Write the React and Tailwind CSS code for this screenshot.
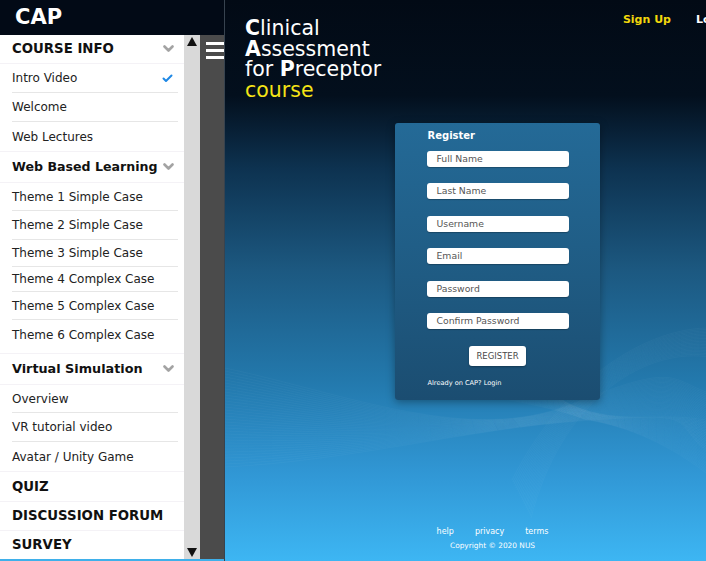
import React from "react";

const Chevron = () => (
  <svg width="11" height="8" viewBox="0 0 11 8" className="shrink-0">
    <polyline points="1.5,1.5 5.5,5.5 9.5,1.5" fill="none" stroke="#a3a3a3" strokeWidth="2.6" strokeLinecap="round" strokeLinejoin="round" />
  </svg>
);

const Check = () => (
  <svg width="11" height="9" viewBox="0 0 11 9" className="shrink-0">
    <polyline points="1.5,4.5 4,7 9.5,1.5" fill="none" stroke="#1e88e5" strokeWidth="2" strokeLinecap="round" strokeLinejoin="round" />
  </svg>
);

const Header = ({ label, h, chevron = true, size = "text-[13.3px]" }) => (
  <div className="bg-white flex items-center justify-between pl-[12px] pr-[10px] mb-px" style={{ height: h }}>
    <span className={`font-bold ${size} text-[#111] whitespace-nowrap`}>{label}</span>
    {chevron && <Chevron />}
  </div>
);

const Item = ({ label, h, last, check }) => (
  <div className="mx-[12px] mr-[6px] flex items-center justify-between" style={{ height: h, borderBottom: last ? "none" : "1px solid #e6e6e6" }}>
    <span className="text-[12px] text-[#222] whitespace-nowrap">{label}</span>
    {check && <span className="mr-[5px]"><Check /></span>}
  </div>
);

const Group = ({ items, pb = 0 }) => (
  <div className="bg-white mb-px" style={{ paddingBottom: pb }}>
    {items.map((it, i) => (
      <Item key={it[0]} label={it[0]} h={it[1]} check={it[2]} last={i === items.length - 1} />
    ))}
  </div>
);

const Field = ({ label, mt }) => (
  <div
    className="w-[142px] h-[16px] bg-white rounded-[3px] flex items-center pl-[10px] text-[9.3px] text-[#555] shadow-[0_1px_1px_rgba(0,0,0,0.25)]"
    style={{ marginTop: mt }}
  >
    {label}
  </div>
);

function Waves() {
  const a = Array.from({ length: 34 }, (_, i) => i);
  return (
    <svg className="absolute inset-0 pointer-events-none" width="481" height="561" viewBox="225 0 481 561">
      {a.map((i) => (
        <path
          key={"a" + i}
          d={`M225 ${368 + i * 3} C 350 ${395 + i * 2}, 470 ${445 - i * 0.5}, ${572 + i * 0.4} ${404 + i * 0.5} S 670 ${378 + i * 1.2}, 706 ${392 + i * 1.8}`}
          fill="none"
          stroke="white"
          strokeOpacity="0.045"
          strokeWidth="0.7"
        />
      ))}
      {a.map((i) => (
        <path
          key={"b" + i}
          d={`M470 ${318 + i * 2.2} C 520 ${370 + i}, 555 ${398 + i * 0.3}, ${574 + i * 0.3} ${406 + i * 0.4} C 620 ${425}, 660 ${412 + i * 0.8}, 706 ${420 + i * 1.6}`}
          fill="none"
          stroke="white"
          strokeOpacity="0.04"
          strokeWidth="0.7"
        />
      ))}
      {a.slice(0, 20).map((i) => (
        <path
          key={"c" + i}
          d={`M706 ${328 + i * 1.5} C 640 ${330 + i}, 560 ${385 + i}, ${512 + i} ${480 + i * 2}`}
          fill="none"
          stroke="white"
          strokeOpacity="0.045"
          strokeWidth="0.7"
        />
      ))}
    </svg>
  );
}

export default function App() {
  return (
    <div className="w-[706px] h-[561px] overflow-hidden flex font-['DejaVu_Sans',sans-serif]">
      {/* Sidebar */}
      <div className="w-[225px] h-full flex flex-col border-r border-[#37434f] shrink-0">
        <div className="h-[35px] bg-[#020a16] flex items-center pl-[15px] shrink-0">
          <span className="text-white font-bold text-[21px] leading-none">CAP</span>
        </div>
        <div className="flex flex-1 min-h-0">
          <div className="w-[184px] bg-[#f4f2f6] overflow-hidden">
            <Header label="COURSE INFO" h={28} />
            <Group items={[["Intro Video", 29, true], ["Welcome", 29], ["Web Lectures", 29]]} />
            <Header label="Web Based Learning" h={30} size="text-[12.6px]" />
            <Group
              pb={4}
              items={[
                ["Theme 1 Simple Case", 28],
                ["Theme 2 Simple Case", 29],
                ["Theme 3 Simple Case", 27],
                ["Theme 4 Complex Case", 25],
                ["Theme 5 Complex Case", 28],
                ["Theme 6 Complex Case", 29],
              ]}
            />
            <Header label="Virtual Simulation" h={30} size="text-[12.8px]" />
            <Group items={[["Overview", 28], ["VR tutorial video", 29], ["Avatar / Unity Game", 29]]} />
            <Header label="QUIZ" h={29} chevron={false} />
            <Header label="DISCUSSION FORUM" h={28} chevron={false} />
            <Header label="SURVEY" h={28} chevron={false} />
          </div>
          <div className="w-[16px] bg-[#d9d9d9] flex flex-col justify-between items-center py-[2px]">
            <svg width="10" height="9" viewBox="0 0 10 9"><polygon points="5,0 10,9 0,9" fill="#111" /></svg>
            <svg width="10" height="9" viewBox="0 0 10 9"><polygon points="0,0 10,0 5,9" fill="#111" /></svg>
          </div>
          <div className="w-[24px] bg-[#4b4b4b] flex flex-col gap-[4px] pt-[7px] pl-[6px]">
            <div className="w-[18px] h-[3px] bg-white" />
            <div className="w-[18px] h-[3px] bg-white" />
            <div className="w-[18px] h-[3px] bg-white" />
          </div>
        </div>
        <div className="h-[2px] bg-[#3fb0ea] shrink-0" />
      </div>

      {/* Main */}
      <div className="relative flex-1 h-full overflow-hidden flex flex-col bg-[linear-gradient(180deg,#020a15_0%,#030f1d_17%,#0d3250_30%,#1c5880_48%,#2379ad_68%,#3198d6_85%,#3db6f3_100%)]">
        <Waves />
        <div className="relative flex items-start h-[100px]">
          <div className="pl-[20px] pt-[18px] text-white text-[20.5px] leading-[20.5px] whitespace-nowrap">
            <div><b>C</b>linical</div>
            <div><b>A</b>ssessment</div>
            <div>for <b>P</b>receptor</div>
            <div className="text-[#f5e416]">course</div>
          </div>
          <div className="ml-auto mr-[-24px] pt-[12px] flex gap-[25px] font-bold text-[11px] whitespace-nowrap">
            <span className="text-[#f2d70c]">Sign Up</span>
            <span className="text-white">Login</span>
          </div>
        </div>

        <div className="relative ml-[170px] mt-[23px] w-[205px] h-[277px] rounded-[3px] bg-[linear-gradient(180deg,#246a97_0%,#1f5b83_55%,#1b4d71_100%)] shadow-[0_2px_8px_rgba(0,0,0,0.35)] flex flex-col items-center">
          <div className="w-[142px] flex flex-col">
            <div className="pt-[7px] text-white font-bold text-[10px] leading-[12px] pl-px">Register</div>
            <Field label="Full Name" mt={9} />
            <Field label="Last Name" mt={16} />
            <Field label="Username" mt={17} />
            <Field label="Email" mt={16} />
            <Field label="Password" mt={17} />
            <Field label="Confirm Password" mt={16} />
            <div className="mt-[17px] self-center w-[57px] h-[20px] bg-white rounded-[3px] flex items-center justify-center text-[8.5px] text-[#4a4a4a] shadow-[0_1px_2px_rgba(0,0,0,0.3)]">
              REGISTER
            </div>
            <div className="mt-[13px] text-white text-[6.6px] leading-[8px] pl-px whitespace-nowrap">Already on CAP? Login</div>
          </div>
        </div>

        <div className="flex-1" />
        <div className="relative pl-[54px] pb-[10px] flex flex-col items-center text-white">
          <div className="flex gap-[21px] text-[8px] leading-[10px]">
            <span>help</span>
            <span>privacy</span>
            <span>terms</span>
          </div>
          <div className="mt-[4px] text-[7.4px] leading-[10px] whitespace-nowrap">Copyright © 2020 NUS</div>
        </div>
      </div>
    </div>
  );
}
